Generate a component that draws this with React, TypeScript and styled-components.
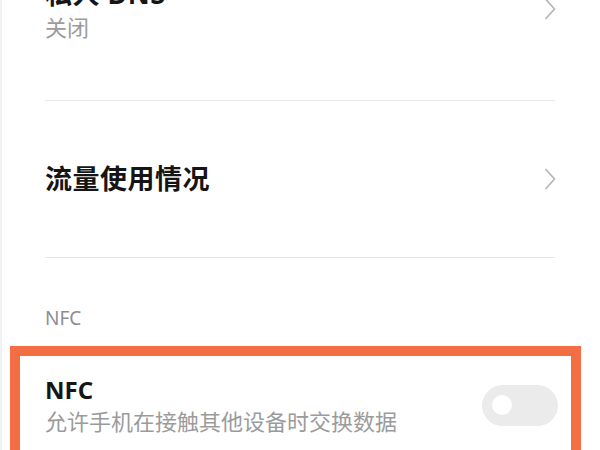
import React from 'react';
import styled, { createGlobalStyle } from 'styled-components';

const GlobalStyle = createGlobalStyle`
    html, body {
        margin: 0;
        padding: 0;
        height: 450px;
        overflow: hidden;
        background: #ffffff;
    }
    body {
        font-family: "Noto Sans", "Noto Sans CJK SC", sans-serif;
    }
`

function Chevron() {
    return (
        <ChevronIcon width="12" height="22" viewBox="0 0 12 22">
            <polyline points="1.5,1 10.5,11 1.5,21" fill="none" stroke="#b5b5b5" strokeWidth="1.7" strokeLinejoin="miter"/>
        </ChevronIcon>
    )
}

function App() {
    return (
        <Page>
            <GlobalStyle/>
            <List>
                <Row $pad={58}>
                    <TextBlock>
                        <Title>私人 DNS</Title>
                        <Subtitle>关闭</Subtitle>
                    </TextBlock>
                    <Chevron/>
                </Row>
                <DividerLine/>
                <Row $pad={60}>
                    <Title>流量使用情况</Title>
                    <Chevron/>
                </Row>
                <DividerLine/>
                <SectionHeader>NFC</SectionHeader>
            </List>
            <Highlight>
                <ToggleRow>
                    <TextBlock>
                        <NfcTitle>NFC</NfcTitle>
                        <Subtitle>允许手机在接触其他设备时交换数据</Subtitle>
                    </TextBlock>
                    <Switch>
                        <Knob/>
                    </Switch>
                </ToggleRow>
            </Highlight>
        </Page>
    )
}

const Page = styled.div`
    width: 600px;
    height: 450px;
    box-sizing: border-box;
    border-left: 2px solid #f1f1f1;
    overflow: hidden;
`

const List = styled.div`
    margin-top: -82px;
    padding: 0 45px 0 43px;
`

const Row = styled.div<{ $pad: number }>`
    display: flex;
    align-items: center;
    justify-content: space-between;
    padding: ${p => p.$pad}px 0;
`

const TextBlock = styled.div`
    display: flex;
    flex-direction: column;
`

const Title = styled.div`
    font-size: 27px;
    line-height: 36px;
    font-weight: 700;
    color: #151515;
    letter-spacing: 0.5px;
`

const Subtitle = styled.div`
    font-size: 22px;
    line-height: 30px;
    color: #9b9b9b;
`

const ChevronIcon = styled.svg`
    display: block;
    margin-right: -1px;
`

const DividerLine = styled.hr`
    border: 0;
    height: 1px;
    margin: 0;
    background-color: #e7e7e7;
`

const SectionHeader = styled.div`
    padding-top: 48px;
    font-size: 19px;
    line-height: 24px;
    color: #8d8d92;
`

const Highlight = styled.div`
    margin: 16px 0 0 8px;
    width: 571px;
    box-sizing: border-box;
    border: 10px solid #f36e43;
    border-bottom: none;
    padding: 18px 13px 18px 25px;
`

const ToggleRow = styled.div`
    display: flex;
    align-items: center;
    justify-content: space-between;
`

const NfcTitle = styled.div`
    font-size: 24px;
    line-height: 32px;
    font-weight: 700;
    color: #151515;
`

const Switch = styled.div`
    width: 76px;
    height: 41px;
    border-radius: 21px;
    background: #ebebeb;
    display: flex;
    align-items: center;
    padding-left: 10px;
    box-sizing: border-box;
`

const Knob = styled.div`
    width: 20px;
    height: 20px;
    border-radius: 50%;
    background: #ffffff;
`

export default App;
